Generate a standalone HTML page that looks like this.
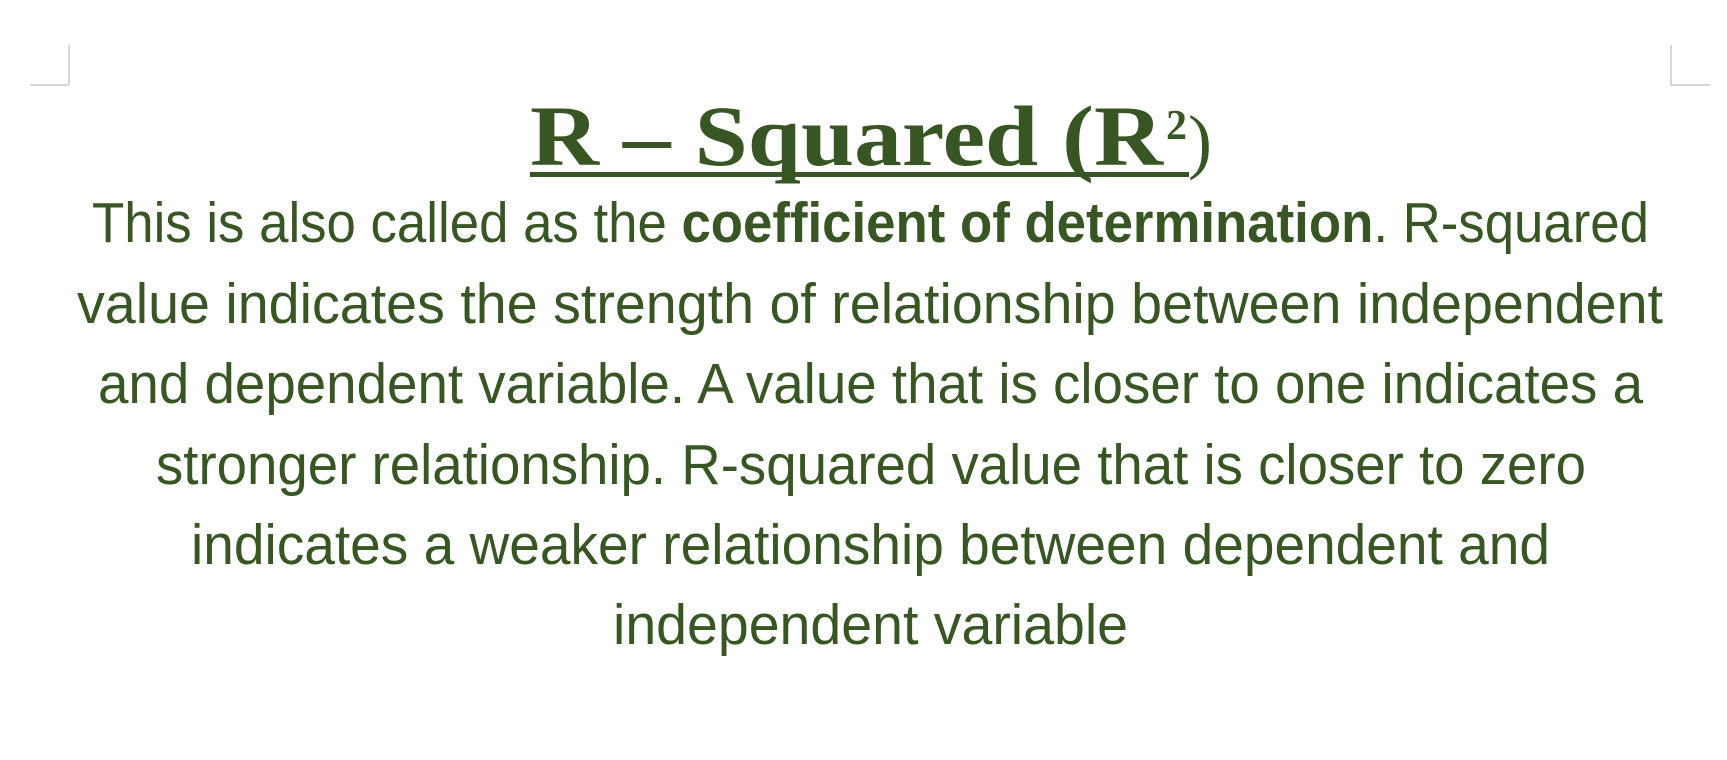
<!DOCTYPE html>
<html><head><meta charset="utf-8"><style>
html,body{margin:0;padding:0;background:#fff;width:1727px;height:760px;overflow:hidden}
svg{display:block}
text{fill:#375623}
.b{font-family:"Liberation Sans",sans-serif;font-size:57px}
</style></head><body>
<svg width="1727" height="760" viewBox="0 0 1727 760" xmlns="http://www.w3.org/2000/svg">
<g stroke="#bfbfbf" stroke-width="1.2" fill="none">
<path d="M30 85H69V45"/>
<path d="M1671 45V85H1710"/>
</g>
<text x="530" y="165" font-family="'Liberation Serif',serif" font-weight="bold" font-size="86" textLength="633" lengthAdjust="spacingAndGlyphs">R – Squared (R</text>
<text x="1166" y="139" font-family="'Liberation Serif',serif" font-weight="bold" font-size="42">2</text>
<text x="1188" y="165" font-family="'Liberation Serif',serif" font-size="72">)</text>
<rect x="530" y="172" width="659" height="5" fill="#375623"/>
<text class="b" x="92" y="242" textLength="1557" lengthAdjust="spacingAndGlyphs">This is also called as the <tspan font-weight="bold">coefficient of determination</tspan>. R-squared</text>
<text class="b" x="77" y="323" textLength="1586" lengthAdjust="spacingAndGlyphs">value indicates the strength of relationship between independent</text>
<text class="b" x="98" y="403" textLength="1545" lengthAdjust="spacingAndGlyphs">and dependent variable. A value that is closer to one indicates a</text>
<text class="b" x="156" y="484" textLength="1430" lengthAdjust="spacingAndGlyphs">stronger relationship. R-squared value that is closer to zero</text>
<text class="b" x="191" y="564" textLength="1359" lengthAdjust="spacingAndGlyphs">indicates a weaker relationship between dependent and</text>
<text class="b" x="613" y="644" textLength="515" lengthAdjust="spacingAndGlyphs">independent variable</text>
</svg>
</body></html>
